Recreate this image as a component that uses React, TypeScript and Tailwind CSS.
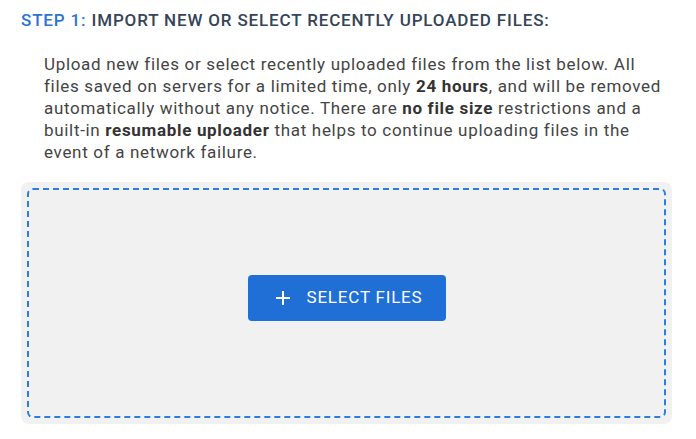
import * as React from 'react';

const PlusIcon = () => (
  <svg width="14" height="14" viewBox="0 0 14 14" fill="none" stroke="currentColor" strokeWidth="2">
    <path d="M7 0v14M0 7h14" />
  </svg>
);

export default function App() {
  return (
    <div className="w-[696px] h-[439px] bg-white font-['Roboto',sans-serif] overflow-hidden">
      {/* Step heading */}
      <h2 className="pl-[21px] pt-[10px] text-[17px] leading-[20px] font-medium tracking-[0.85px] text-[#34445a] uppercase">
        <span className="text-[#2b74d6]">Step 1:</span> Import new or select recently uploaded files:
      </h2>

      {/* Description */}
      <p className="mt-[23px] ml-[44px] w-[625px] text-[17px] leading-[22px] tracking-[0.68px] text-[#444]">
        Upload new files or select recently uploaded files from the list below. All files saved on servers for a
        limited time, only <b className="font-bold text-[#333]">24 hours</b>, and will be removed automatically
        without any notice. There are <b className="font-bold text-[#333]">no file size</b> restrictions and a
        built-in <b className="font-bold text-[#333]">resumable uploader</b> that helps to continue uploading files in
        the event of a network failure.
      </p>

      {/* Drop zone */}
      <div className="mt-[19px] ml-[21px] w-[651px] h-[242px] bg-[#f1f1f1] rounded-[8px] p-[6px]">
        <div className="h-full pb-[10px] border-2 border-dashed border-[#2b7de0] rounded-[6px] flex items-center justify-center">
          <button className="w-[198px] h-[46px] pl-[28px] bg-[#1f6fd6] rounded-[4px] text-white flex items-center gap-[17px] text-[17px] font-normal tracking-[0.8px] uppercase">
            <PlusIcon />
            Select files
          </button>
        </div>
      </div>
    </div>
  );
}
